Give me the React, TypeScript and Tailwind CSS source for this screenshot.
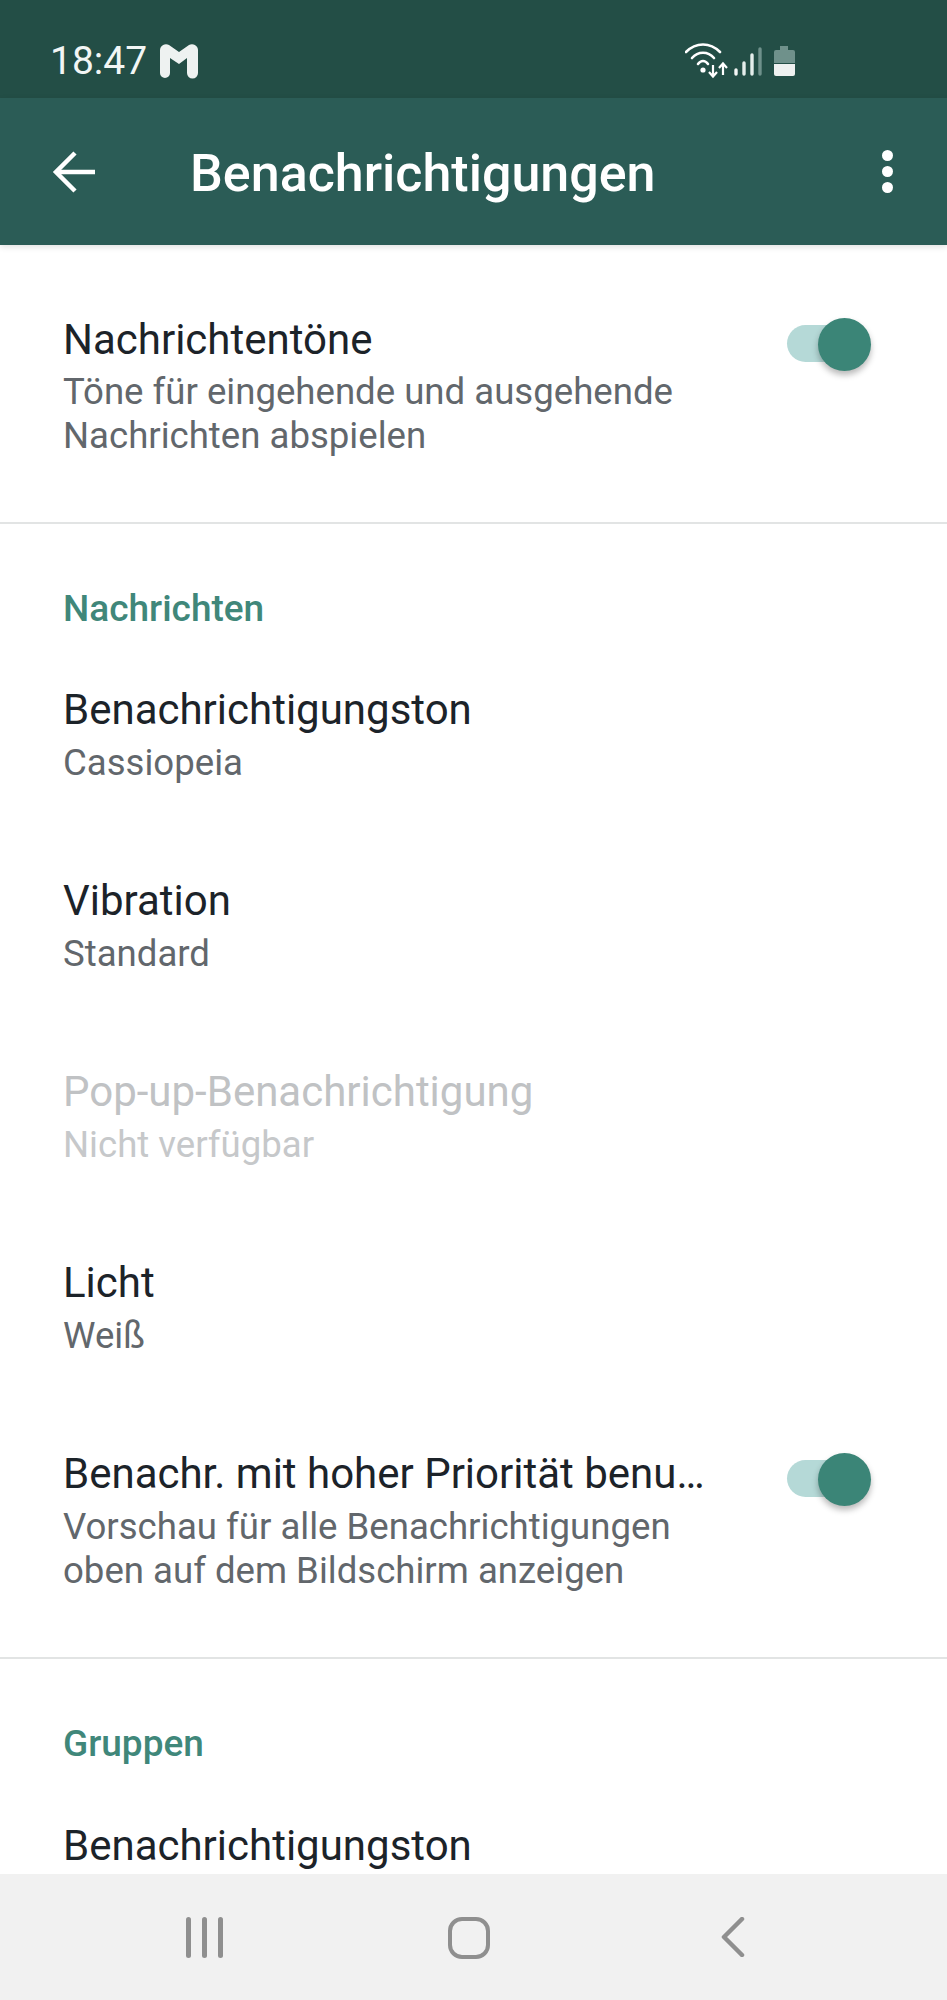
import React from "react";

function Toggle() {
  return (
    <div className="relative h-[53px] w-[84px] shrink-0">
      <div className="absolute left-0 top-[7px] h-[37px] w-[70px] rounded-full bg-[#b5d9d7]" />
      <div className="absolute right-0 top-0 h-[53px] w-[53px] rounded-full bg-[#3b8577] shadow-[0_4px_6px_rgba(0,0,0,0.28)]" />
    </div>
  );
}

function Row({
  title,
  lines,
  disabled,
  toggle,
  last,
}: {
  title: string;
  lines: string[];
  disabled?: boolean;
  toggle?: boolean;
  last?: boolean;
}) {
  return (
    <div className={`flex items-start justify-between pl-[63px] pr-[76px] pt-[45.25px] ${last ? "pb-[65px]" : "pb-[45.25px]"}`}>
      <div className="min-w-0">
        <div className={`whitespace-nowrap text-[42px] leading-[52px] ${disabled ? "text-[#c0c2c4]" : "text-[#1c2329]"}`}>
          {title}
        </div>
        <div className={`mt-[5px] text-[36.6px] leading-[43.5px] ${disabled ? "text-[#c6c8ca]" : "text-[#62676c]"}`}>
          {lines.map((l) => (
            <div key={l} className="whitespace-nowrap">
              {l}
            </div>
          ))}
        </div>
      </div>
      {toggle && (
        <div className="mt-[5px]">
          <Toggle />
        </div>
      )}
    </div>
  );
}

function Section({ label }: { label: string }) {
  return (
    <div className="pl-[63px] pt-[65px] pb-[10px] text-[37px] font-medium leading-[40px] text-[#40877a]">
      {label}
    </div>
  );
}

function StatusIcons() {
  return (
    <svg width="120" height="40" viewBox="0 0 120 40" className="block">
      {/* wifi */}
      <g fill="none" stroke="#fff" strokeWidth="2.6" strokeLinecap="round">
        <path d="M1 11 C11 1 25 1 35 11" />
        <path d="M7 17 C13 10 23 10 29 17" />
        <path d="M13 23 C16 19 20 19 23 23" />
      </g>
      <circle cx="18" cy="29" r="2.6" fill="#fff" />
      <g fill="none" stroke="#fff" strokeWidth="2.2">
        <path d="M28 24 V35 M24 31 L28 35.5 L32 31" />
        <path d="M38 34 V23 M34 27 L38 22.5 L42 27" />
      </g>
      {/* signal */}
      <g strokeLinecap="round" strokeWidth="3.4" fill="none">
        <path d="M51 33 V29" stroke="#f4f7f6" />
        <path d="M59 33 V22" stroke="#e4eeeb" />
        <path d="M67 33 V14" stroke="#e4eeeb" />
        <path d="M75 33 V8" stroke="#6f918b" />
      </g>
      {/* battery */}
      <path d="M95 5 h8 v4 h5 a2 2 0 0 1 2 2 v11 h-21 v-11 a2 2 0 0 1 2 -2 h4 z" fill="#6f918b" />
      <path d="M89 23 h21 v10 a2 2 0 0 1 -2 2 h-17 a2 2 0 0 1 -2 -2 z" fill="#eef1f0" />
    </svg>
  );
}

export default function App() {
  return (
    <div className="flex h-[2000px] w-[947px] flex-col overflow-hidden bg-white font-['Roboto',sans-serif]">
      <div className="flex h-[98px] shrink-0 items-center justify-between bg-[#234e46] pl-[50px] pr-[142px] pt-[24px]">
        <div className="flex items-center gap-[13px]">
          <span className="text-[39px] leading-[44px] text-[#f2f6f5]">18:47</span>
          <svg width="38" height="36" viewBox="0 0 38 36" className="block">
            <path
              d="M0 7 a6 6 0 0 1 9 -5 L19 9 L29 2 a6 6 0 0 1 9 5 V30 a5.5 5.5 0 0 1 -11 0 V15 L19 21 L10 15 V30 a5 5 0 0 1 -10 0 z"
              fill="#eef2f1"
            />
          </svg>
        </div>
        <StatusIcons />
      </div>

      <div className="relative z-10 flex h-[147px] shrink-0 items-center bg-[#2b5c56] shadow-[0_2px_6px_rgba(0,0,0,0.12)]">
        <svg width="44" height="42" viewBox="0 0 44 42" className="ml-[52px] block" fill="none" stroke="#fff" strokeWidth="4.5">
          <path d="M43 21 H4" />
          <path d="M23 2 L4 21 L23 40" />
        </svg>
        <div className="ml-[94px] flex-1 pt-[4px] text-[52px] font-medium leading-[56px] text-white">Benachrichtigungen</div>
        <div className="mr-[54px] flex flex-col gap-[5px]">
          <div className="h-[11px] w-[11px] rounded-full bg-white" />
          <div className="h-[11px] w-[11px] rounded-full bg-white" />
          <div className="h-[11px] w-[11px] rounded-full bg-white" />
        </div>
      </div>

      <div className="min-h-0 flex-1 overflow-hidden">
        <div className="border-b-2 border-[#e2e4e4]">
          <div className="flex items-start justify-between pl-[63px] pr-[76px] pt-[69px] pb-[65px]">
            <div>
              <div className="text-[42px] leading-[52px] text-[#1c2329]">Nachrichtentöne</div>
              <div className="mt-[4px] text-[36.6px] leading-[43.5px] text-[#62676c]">
                <div>Töne für eingehende und ausgehende</div>
                <div>Nachrichten abspielen</div>
              </div>
            </div>
            <div className="mt-[4px]">
              <Toggle />
            </div>
          </div>
        </div>

        <Section label="Nachrichten" />
        <Row title="Benachrichtigungston" lines={["Cassiopeia"]} />
        <Row title="Vibration" lines={["Standard"]} />
        <Row title="Pop-up-Benachrichtigung" lines={["Nicht verfügbar"]} disabled />
        <Row title="Licht" lines={["Weiß"]} />
        <div className="border-b-2 border-[#e2e4e4]">
          <Row
            title="Benachr. mit hoher Priorität benu…"
            lines={["Vorschau für alle Benachrichtigungen", "oben auf dem Bildschirm anzeigen"]}
            toggle
            last
          />
        </div>

        <Section label="Gruppen" />
        <Row title="Benachrichtigungston" lines={[]} />
      </div>

      <div className="relative z-10 flex h-[126px] shrink-0 items-start bg-[#f1f1f1] pt-[43px]">
        <div className="ml-[186px] flex h-[41px] gap-[11px]">
          <div className="h-full w-[5px] rounded-full bg-[#8f8f8f]" />
          <div className="h-full w-[5px] rounded-full bg-[#8f8f8f]" />
          <div className="h-full w-[5px] rounded-full bg-[#8f8f8f]" />
        </div>
        <div className="ml-[225px] h-[42px] w-[42px] rounded-[14px] border-[4.5px] border-[#8f8f8f]" />
        <svg width="24" height="40" viewBox="0 0 24 40" className="ml-[231px] block" fill="none" stroke="#8f8f8f" strokeWidth="4.5" strokeLinecap="round" strokeLinejoin="round">
          <path d="M21 2 L3 20 L21 38" />
        </svg>
      </div>
    </div>
  );
}
